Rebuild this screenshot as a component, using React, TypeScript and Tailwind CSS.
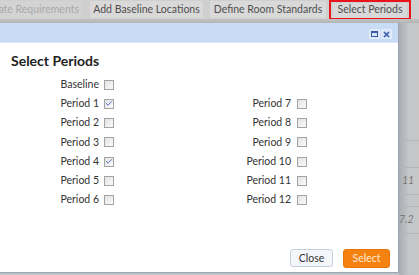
import { Check } from "lucide-react";

const left = [
  { label: "Baseline", checked: false },
  { label: "Period 1", checked: true },
  { label: "Period 2", checked: false },
  { label: "Period 3", checked: false },
  { label: "Period 4", checked: true },
  { label: "Period 5", checked: false },
  { label: "Period 6", checked: false },
];

const right = [null, "Period 7", "Period 8", "Period 9", "Period 10", "Period 11", "Period 12"];

function Box({ checked }: { checked: boolean }) {
  return (
    <div className="w-[10px] h-[10px] border border-[#a3a3a3] bg-gradient-to-br from-[#e2e2e2] to-[#fbfbfb] flex items-center justify-center">
      {checked && <Check className="w-[9px] h-[9px] text-[#3650c0]" strokeWidth={2.5} />}
    </div>
  );
}

export default function App() {
  return (
    <div className="w-[419px] h-[275px] overflow-hidden bg-[#c3c3c3] flex flex-col font-['Lato','Liberation_Sans',sans-serif] text-[10.5px]">
      {/* tab strip behind the modal */}
      <div className="h-[19px] flex items-start bg-[#cfcfcf] shrink-0">
        <div className="w-[82px] h-[17px] mt-[1px] bg-[#d3d3d3] text-[#a9a9a9] flex items-center justify-end pr-[3px] whitespace-nowrap overflow-hidden">
          ate Requirements
        </div>
        <div className="w-[113px] h-[17px] mt-[1px] ml-[8px] bg-[#d9d9d9] text-[#4f4f4f] flex items-center justify-center whitespace-nowrap">
          Add Baseline Locations
        </div>
        <div className="w-[116px] h-[17px] mt-[1px] ml-[7px] bg-[#d9d9d9] text-[#4f4f4f] flex items-center justify-center whitespace-nowrap">
          Define Room Standards
        </div>
        <div className="w-[82px] h-[20px] ml-[3px] border-2 border-[#e8161c] flex items-center px-[2px]">
          <div className="w-full h-[15px] bg-[#d9d9d9] text-[#4f4f4f] flex items-center justify-center whitespace-nowrap">
            Select Periods
          </div>
        </div>
      </div>
      <div className="h-[4px] shrink-0 bg-gradient-to-b from-[#c2c2c2] to-[#b5b5b5]" />

      <div className="flex flex-1 min-h-0">
        {/* dialog */}
        <div className="w-[399px] h-[250px] shrink-0 bg-white border-r border-b border-[#99a5b6] flex flex-col">
          <div className="h-[20px] bg-[#c9dcf6] border-b border-[#dbe7f8] flex items-start justify-end gap-[1px] pr-[6px] pt-[6px]">
            <div className="w-[11px] h-[10px] rounded-[1px] border border-[#e7eefb] bg-[#d7e4f7] flex items-center justify-center">
              <div className="w-[7px] h-[6px] border border-[#3b5ea8] border-t-2" />
            </div>
            <div className="w-[11px] h-[10px] rounded-[1px] border border-[#e7eefb] bg-[#d7e4f7] flex items-center justify-center">
              <svg width="7" height="7" viewBox="0 0 7 7">
                <path d="M1 1 L6 6 M6 1 L1 6" stroke="#3b5ea8" strokeWidth="1.6" />
              </svg>
            </div>
          </div>

          <div className="pl-[11px] pt-[10px] text-[14px] leading-[16px] font-bold text-[#222]">Select Periods</div>

          <div className="flex mt-[6px] text-[#333]">
            <div className="flex flex-col">
              {left.map((r) => (
                <div key={r.label} className="h-[19.25px] flex items-center">
                  <span className="w-[99px] text-right">{r.label}</span>
                  <div className="ml-[5px]">
                    <Box checked={r.checked} />
                  </div>
                </div>
              ))}
            </div>
            <div className="flex flex-col ml-[86px]">
              {right.map((r, i) => (
                <div key={i} className="h-[19.25px] flex items-center">
                  {r && (
                    <>
                      <span className="w-[91px] text-right">{r}</span>
                      <div className="ml-[6px]">
                        <Box checked={false} />
                      </div>
                    </>
                  )}
                </div>
              ))}
            </div>
          </div>

          <div className="mt-auto flex justify-end gap-[10px] pr-[8px] pb-[4px]">
            <button className="w-[43px] h-[18px] rounded-[3px] border border-[#c7d0de] bg-[#f4f6fa] text-[#333] leading-none">
              Close
            </button>
            <button className="w-[47px] h-[19px] rounded-[3px] border border-[#e8760c] bg-[#f5820f] text-[#fde9d6] leading-none">
              Select
            </button>
          </div>
        </div>

        {/* page content peeking out on the right */}
        <div className="flex-1 flex flex-col overflow-hidden bg-gradient-to-r from-[#a9adb2] via-[#c4c6c8] to-[#c6c6c6] text-[#7a7a7a] italic">
          <div className="h-[117px] shrink-0" />
          <div className="h-[27px] border-t border-[#b2b6ba]" />
          <div className="h-[27px] border-t border-[#b2b6ba] flex items-center pl-[3px] whitespace-nowrap">11</div>
          <div className="h-[12px] border-t border-[#b2b6ba]" />
          <div className="h-[27px] border-t border-[#b2b6ba] flex items-center whitespace-nowrap">7.2</div>
          <div className="flex-1 border-t border-[#b2b6ba]" />
        </div>
      </div>
    </div>
  );
}
